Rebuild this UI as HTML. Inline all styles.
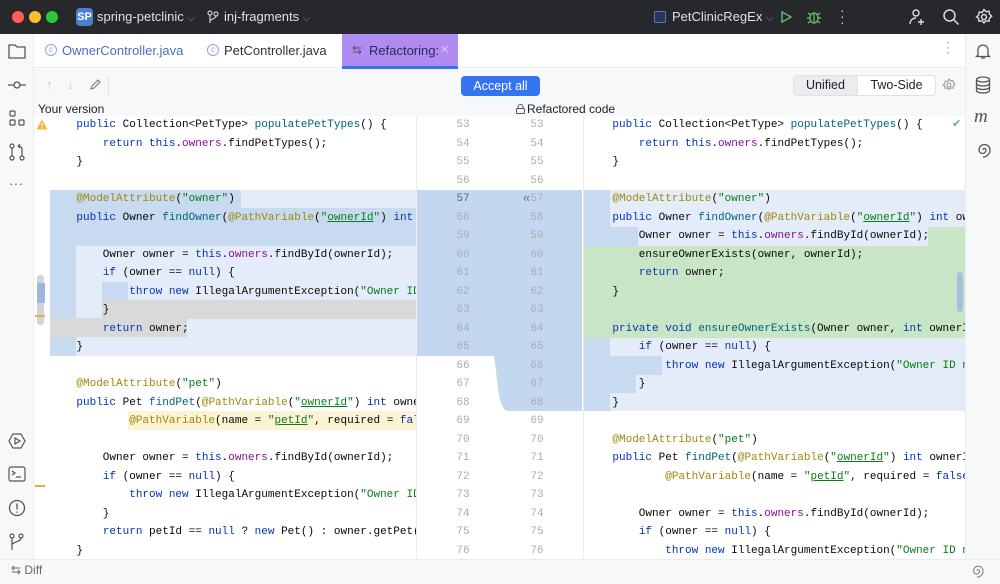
<!DOCTYPE html>
<html><head><meta charset="utf-8"><style>
*{margin:0;padding:0;box-sizing:border-box}
body{width:1000px;height:584px;overflow:hidden;background:#fff;font-family:"Liberation Sans",sans-serif;position:relative}
.abs{position:absolute}
.code{font-family:"Liberation Mono",monospace;font-size:11px;white-space:pre;color:#080808;line-height:18.5px;height:18.5px}
.k{color:#0033b3}.f{color:#871094}.a{color:#9e880d}.s{color:#067d17}.m{color:#00627a}.u{text-decoration:underline}
.num{font-family:"Liberation Mono",monospace;font-size:11px;color:#a8adb5;line-height:18.5px;width:30px;text-align:center}
svg{position:absolute}
</style></head><body>
<!-- title bar -->
<div class="abs" style="left:0;top:0;width:1000px;height:34px;background:#27282c"></div>
<div class="abs" style="left:12px;top:11px;width:12px;height:12px;border-radius:6px;background:#fe5f57"></div>
<div class="abs" style="left:29px;top:11px;width:12px;height:12px;border-radius:6px;background:#febc2e"></div>
<div class="abs" style="left:46px;top:11px;width:12px;height:12px;border-radius:6px;background:#28c840"></div>
<div class="abs" style="left:76px;top:8px;width:17px;height:18px;border-radius:4px;background:#4a80d0;color:#fff;font-size:11px;font-weight:bold;line-height:18px;text-align:center">SP</div>
<div class="abs" style="left:97px;top:9px;color:#dfe1e5;font-size:13px">spring-petclinic <span style="color:#888;font-size:10px">⌵</span></div>
<svg style="left:207px;top:10px" width="12" height="14" viewBox="0 0 12 14" fill="none" stroke="#ccc" stroke-width="1.2"><circle cx="3" cy="3" r="2"/><circle cx="9" cy="4" r="2"/><path d="M3 5v8M9 6c0 3-6 3-6 5"/></svg>
<div class="abs" style="left:224px;top:9px;color:#dfe1e5;font-size:13px">inj-fragments <span style="color:#888;font-size:10px">⌵</span></div>
<div class="abs" style="left:654px;top:11px;width:12px;height:12px;border:1.5px solid #5578b8;border-radius:2px;background:#27345a"></div>
<div class="abs" style="left:672px;top:9px;color:#dfe1e5;font-size:13px">PetClinicRegEx <span style="color:#888;font-size:10px">⌵</span></div>
<svg style="left:779px;top:10px" width="14" height="14" viewBox="0 0 14 14" fill="none" stroke="#5fb865" stroke-width="1.5"><path d="M3 2l9 5-9 5z"/></svg>
<svg style="left:806px;top:9px" width="16" height="16" viewBox="0 0 16 16" fill="none" stroke="#5fb865" stroke-width="1.4"><ellipse cx="8" cy="9" rx="4" ry="5"/><path d="M1 9h3M12 9h3M2 4l3 2M14 4l-3 2M2 14l3-2M14 14l-3-2M8 4v10"/></svg>
<div class="abs" style="left:840px;top:7px;color:#ccc;font-size:14px;line-height:6px">·<br>·<br>·</div>
<svg style="left:908px;top:8px" width="18" height="18" viewBox="0 0 18 18" fill="none" stroke="#ddd" stroke-width="1.4"><circle cx="8" cy="5" r="3"/><path d="M2 16c0-4 3-6 6-6M13 11v6M10 14h6"/></svg>
<svg style="left:942px;top:8px" width="18" height="18" viewBox="0 0 18 18" fill="none" stroke="#ddd" stroke-width="1.5"><circle cx="7.5" cy="7.5" r="5.5"/><path d="M11.5 11.5l5 5"/></svg>
<svg style="left:975px;top:8px" width="18" height="18" viewBox="0 0 18 18" fill="none" stroke="#ddd" stroke-width="1.4"><circle cx="9" cy="9" r="2.5"/><path d="M9 1.5l2 2.2 3-.5.5 3 2.2 2-2.2 2-.5 3-3-.5-2 2.2-2-2.2-3 .5-.5-3L1.5 9l2.2-2 .5-3 3 .5z"/></svg>

<!-- left tool strip -->
<div class="abs" style="left:0;top:34px;width:34px;height:525px;background:#f7f8fa;border-right:1px solid #ebecf0"></div>
<svg style="left:8px;top:43px" width="18" height="16" viewBox="0 0 18 16" fill="none" stroke="#555" stroke-width="1.3"><path d="M1 2h6l2 2h8v11H1z"/></svg>
<svg style="left:8px;top:79px" width="18" height="12" viewBox="0 0 18 12" fill="none" stroke="#555" stroke-width="1.3"><circle cx="9" cy="6" r="3"/><path d="M0 6h6M12 6h6"/></svg>
<svg style="left:9px;top:110px" width="16" height="16" viewBox="0 0 16 16" fill="none" stroke="#555" stroke-width="1.2"><rect x="1" y="1" width="5" height="5" rx="1"/><rect x="1" y="10" width="5" height="5" rx="1"/><rect x="10" y="10" width="5" height="5" rx="1"/></svg>
<svg style="left:9px;top:143px" width="16" height="18" viewBox="0 0 16 18" fill="none" stroke="#555" stroke-width="1.2"><circle cx="3" cy="3" r="2"/><circle cx="3" cy="15" r="2"/><circle cx="13" cy="15" r="2"/><path d="M3 5v8M13 13V6c0-2-2-3-4-3M9 3l2-2M9 3l2 2"/></svg>
<div class="abs" style="left:9px;top:175px;color:#666;font-size:14px">···</div>
<svg style="left:8px;top:432px" width="18" height="18" viewBox="0 0 18 18" fill="none" stroke="#555" stroke-width="1.2"><path d="M5 2h8l4 7-4 7H5L1 9z"/><path d="M7 6l5 3-5 3z"/></svg>
<svg style="left:8px;top:466px" width="18" height="16" viewBox="0 0 18 16" fill="none" stroke="#555" stroke-width="1.2"><rect x="1" y="1" width="16" height="14" rx="2"/><path d="M4 5l3 2-3 2M8 11h5"/></svg>
<svg style="left:8px;top:499px" width="18" height="18" viewBox="0 0 18 18" fill="none" stroke="#555" stroke-width="1.3"><circle cx="9" cy="9" r="7.5"/><path d="M9 4.5v6M9 12.5v1.2"/></svg>
<svg style="left:9px;top:533px" width="16" height="18" viewBox="0 0 16 18" fill="none" stroke="#555" stroke-width="1.2"><circle cx="3" cy="3" r="2"/><circle cx="12" cy="3" r="2"/><path d="M3 5v12M12 5c0 4-9 4-9 7"/></svg>

<!-- tabs -->
<div class="abs" style="left:34px;top:34px;width:931px;height:34px;background:#fff;border-bottom:1px solid #ebecf0"></div>
<div class="abs" style="left:45px;top:44px;width:12px;height:12px;border:1.2px solid #8fa6d8;border-radius:6px;font-size:8px;color:#8fa6d8;text-align:center;line-height:10px">c</div>
<div class="abs" style="left:62px;top:43px;font-size:13px;color:#4a6fc1">OwnerController.java</div>
<div class="abs" style="left:207px;top:44px;width:12px;height:12px;border:1.2px solid #8fa6d8;border-radius:6px;font-size:8px;color:#8fa6d8;text-align:center;line-height:10px">c</div>
<div class="abs" style="left:224px;top:43px;font-size:13px;color:#333">PetController.java</div>
<div class="abs" style="left:342px;top:34px;width:116px;height:35px;background:#b08cf2;border-bottom:3px solid #3574f0"></div>
<div class="abs" style="left:352px;top:43px;font-size:12px;color:#555">⇆</div>
<div class="abs" style="left:369px;top:43px;font-size:13px;color:#2a2a55">Refactoring:</div>
<div class="abs" style="left:440px;top:43px;font-size:11px;color:#d8c6f8">✕</div>
<div class="abs" style="left:946px;top:40px;color:#888;font-size:12px;line-height:5px">·<br>·<br>·</div>

<!-- right strip -->
<div class="abs" style="left:965px;top:34px;width:35px;height:525px;background:#f7f8fa;border-left:1px solid #ebecf0"></div>
<svg style="left:974px;top:42px" width="18" height="18" viewBox="0 0 18 18" fill="none" stroke="#555" stroke-width="1.3"><path d="M4 13V8a5 5 0 0110 0v5l1.5 1.5h-13zM7 16h4"/></svg>
<svg style="left:975px;top:76px" width="16" height="18" viewBox="0 0 16 18" fill="none" stroke="#555" stroke-width="1.3"><ellipse cx="8" cy="3.5" rx="6.5" ry="2.5"/><path d="M1.5 3.5v11c0 1.4 3 2.5 6.5 2.5s6.5-1.1 6.5-2.5v-11M1.5 7.5c0 1.4 3 2.5 6.5 2.5s6.5-1.1 6.5-2.5M1.5 11c0 1.4 3 2.5 6.5 2.5s6.5-1.1 6.5-2.5"/></svg>
<div class="abs" style="left:974px;top:106px;font-size:19px;font-style:italic;color:#555;font-family:'Liberation Serif',serif">m</div>
<svg style="left:975px;top:142px" width="16" height="16" viewBox="0 0 16 16" fill="none" stroke="#555" stroke-width="1.3"><path d="M8 8a1.5 1.5 0 113 0 3.5 3.5 0 11-7 0 5.5 5.5 0 0111 0 7 7 0 01-7 7"/></svg>

<!-- toolbar -->
<div class="abs" style="left:34px;top:69px;width:931px;height:32px;background:#f7f8fa"></div>
<div class="abs" style="left:46px;top:77px;font-size:13px;color:#c5c8ce">↑</div>
<div class="abs" style="left:67px;top:77px;font-size:13px;color:#c5c8ce">↓</div>
<svg style="left:89px;top:79px" width="12" height="12" viewBox="0 0 12 12" fill="none" stroke="#777" stroke-width="1.1"><path d="M2 10l1-3 6-6 2 2-6 6z"/></svg>
<div class="abs" style="left:108px;top:77px;width:1px;height:20px;background:#e0e0e0"></div>
<div class="abs" style="left:461px;top:76px;width:79px;height:20px;background:#3574f0;border-radius:4px;color:#fff;font-size:12.5px;text-align:center;line-height:20px">Accept all</div>
<div class="abs" style="left:793px;top:75px;width:143px;height:21px;border:1px solid #dfe1e5;border-radius:4px;background:#fff"></div>
<div class="abs" style="left:794px;top:76px;width:64px;height:19px;background:#ebecf0;border-right:1px solid #dfe1e5;font-size:12.5px;text-align:center;line-height:19px;color:#222">Unified</div>
<div class="abs" style="left:858px;top:76px;width:77px;height:19px;font-size:12.5px;text-align:center;line-height:19px;color:#222">Two-Side</div>
<svg style="left:942px;top:78px" width="14" height="14" viewBox="0 0 18 18" fill="none" stroke="#999" stroke-width="1.4"><circle cx="9" cy="9" r="2.5"/><path d="M9 1.5l2 2.2 3-.5.5 3 2.2 2-2.2 2-.5 3-3-.5-2 2.2-2-2.2-3 .5-.5-3L1.5 9l2.2-2 .5-3 3 .5z"/></svg>
<div class="abs" style="left:34px;top:101px;width:931px;height:15px;background:#f7f8fa"></div>
<div class="abs" style="left:38px;top:102px;font-size:12px;color:#222">Your version</div>
<svg style="left:516px;top:104px" width="9" height="10" viewBox="0 0 9 10" fill="none" stroke="#555" stroke-width="1"><rect x="0.5" y="4.5" width="8" height="5" rx="1"/><path d="M2 4.5V3a2.5 2.5 0 015 0v1.5"/></svg>
<div class="abs" style="left:527px;top:102px;font-size:12px;color:#222">Refactored code</div>

<!-- diff backgrounds left -->
<div class="abs" style="left:50px;top:190px;width:366px;height:166px;background:#e3ecf8"></div>
<div class="abs" style="left:50px;top:190px;width:26px;height:166px;background:#c8daf0"></div>
<div class="abs" style="left:76px;top:190px;width:165px;height:18.5px;background:#c8daf0"></div>
<div class="abs" style="left:76px;top:208px;width:340px;height:18.5px;background:#c8daf0"></div>
<div class="abs" style="left:50px;top:227px;width:366px;height:18.5px;background:#c8daf0"></div>
<div class="abs" style="left:102px;top:282px;width:26px;height:18.5px;background:#c8daf0"></div>
<div class="abs" style="left:102px;top:300px;width:314px;height:18.5px;background:#d9d9d9"></div>
<div class="abs" style="left:50px;top:318px;width:137px;height:18.5px;background:#d9d9d9"></div>
<div class="abs" style="left:128px;top:411px;width:288px;height:18.5px;background:#fbf3d3"></div>

<!-- middle -->
<div class="abs" style="left:416px;top:116px;width:1px;height:443px;background:#ebecf0"></div>
<div class="abs" style="left:583px;top:116px;width:1px;height:443px;background:#ebecf0"></div>
<svg style="left:0;top:0" width="1000" height="584"><path d="M417 190H582V411H508Q502 411 499 395L494 356H417Z" fill="#c3d7ee"/></svg>
<div class="abs" style="left:523px;top:190px;font-size:13px;color:#6c7a90">«</div>

<!-- diff backgrounds right -->
<div class="abs" style="left:584px;top:190px;width:381px;height:221px;background:#e3ecf8"></div>
<div class="abs" style="left:584px;top:190px;width:26px;height:37px;background:#c8daf0"></div>
<div class="abs" style="left:584px;top:227px;width:381px;height:111px;background:#c8e6c6"></div>
<div class="abs" style="left:638px;top:227px;width:290px;height:18.5px;background:#e3ecf8"></div>
<div class="abs" style="left:584px;top:227px;width:54px;height:18.5px;background:#c8daf0"></div>
<div class="abs" style="left:584px;top:338px;width:26px;height:73px;background:#c8daf0"></div>
<div class="abs" style="left:610px;top:356px;width:52px;height:18.5px;background:#c8daf0"></div>
<div class="abs" style="left:610px;top:374px;width:26px;height:18.5px;background:#c8daf0"></div>

<!-- scroll markers -->
<div class="abs" style="left:37px;top:275px;width:7px;height:50px;background:#d2d4d8;border-radius:3px"></div>
<div class="abs" style="left:37px;top:283px;width:8px;height:20px;background:#9ab7e0"></div>
<div class="abs" style="left:35px;top:315px;width:10px;height:2px;background:#e0b040"></div>
<div class="abs" style="left:35px;top:485px;width:10px;height:2px;background:#e0b040"></div>
<div class="abs" style="left:957px;top:272px;width:6px;height:40px;background:#a6bfe0;border-radius:3px"></div>
<svg style="left:36px;top:119px" width="12" height="11" viewBox="0 0 12 11"><path d="M6 0.5L11.5 10.5H0.5z" fill="#f0b63c"/><path d="M6 4v3M6 8.3v1" stroke="#fff" stroke-width="1.2"/></svg>
<div class="abs" style="left:952px;top:117px;font-size:11px;color:#5fb865">✔</div>

<!-- left code -->
<div class="abs" style="left:50px;top:116px;width:366px;height:443px;overflow:hidden">
<div class="code">    <span class="k">public</span> Collection&lt;PetType&gt; <span class="m">populatePetTypes</span>() {</div>
<div class="code">        <span class="k">return this</span>.<span class="f">owners</span>.findPetTypes();</div>
<div class="code">    }</div>
<div class="code"> </div>
<div class="code">    <span class="a">@ModelAttribute</span>(<span class="s">"owner"</span>)</div>
<div class="code">    <span class="k">public</span> Owner <span class="m">findOwner</span>(<span class="a">@PathVariable</span>(<span class="s">"<span class="u">ownerId</span>"</span>) <span class="k">int</span> ownerId) {</div>
<div class="code"> </div>
<div class="code">        Owner owner = <span class="k">this</span>.<span class="f">owners</span>.findById(ownerId);</div>
<div class="code">        <span class="k">if</span> (owner == <span class="k">null</span>) {</div>
<div class="code">            <span class="k">throw new</span> IllegalArgumentException(<span class="s">"Owner ID not found"</span>);</div>
<div class="code">        }</div>
<div class="code">        <span class="k">return</span> owner;</div>
<div class="code">    }</div>
<div class="code"> </div>
<div class="code">    <span class="a">@ModelAttribute</span>(<span class="s">"pet"</span>)</div>
<div class="code">    <span class="k">public</span> Pet <span class="m">findPet</span>(<span class="a">@PathVariable</span>(<span class="s">"<span class="u">ownerId</span>"</span>) <span class="k">int</span> ownerId,</div>
<div class="code">            <span class="a">@PathVariable</span>(name = <span class="s">"<span class="u">petId</span>"</span>, required = <span class="k">false</span>) Integer petId) {</div>
<div class="code"> </div>
<div class="code">        Owner owner = <span class="k">this</span>.<span class="f">owners</span>.findById(ownerId);</div>
<div class="code">        <span class="k">if</span> (owner == <span class="k">null</span>) {</div>
<div class="code">            <span class="k">throw new</span> IllegalArgumentException(<span class="s">"Owner ID not found"</span>);</div>
<div class="code">        }</div>
<div class="code">        <span class="k">return</span> petId == <span class="k">null</span> ? <span class="k">new</span> Pet() : owner.getPet(petId);</div>
<div class="code">    }</div>
</div>

<!-- numbers -->
<div class="abs" style="left:448px;top:116px">
<div class="num">53</div><div class="num">54</div><div class="num">55</div><div class="num">56</div><div class="num" style="color:#5f6670">57</div><div class="num">58</div><div class="num">59</div><div class="num">60</div><div class="num">61</div><div class="num">62</div><div class="num">63</div><div class="num">64</div><div class="num">65</div><div class="num">66</div><div class="num">67</div><div class="num">68</div><div class="num">69</div><div class="num">70</div><div class="num">71</div><div class="num">72</div><div class="num">73</div><div class="num">74</div><div class="num">75</div><div class="num">76</div>
</div>
<div class="abs" style="left:522px;top:116px">
<div class="num">53</div><div class="num">54</div><div class="num">55</div><div class="num">56</div><div class="num">57</div><div class="num">58</div><div class="num">59</div><div class="num">60</div><div class="num">61</div><div class="num">62</div><div class="num">63</div><div class="num">64</div><div class="num">65</div><div class="num">66</div><div class="num">67</div><div class="num">68</div><div class="num">69</div><div class="num">70</div><div class="num">71</div><div class="num">72</div><div class="num">73</div><div class="num">74</div><div class="num">75</div><div class="num">76</div>
</div>

<!-- right code -->
<div class="abs" style="left:586px;top:116px;width:379px;height:443px;overflow:hidden">
<div class="code">    <span class="k">public</span> Collection&lt;PetType&gt; <span class="m">populatePetTypes</span>() {</div>
<div class="code">        <span class="k">return this</span>.<span class="f">owners</span>.findPetTypes();</div>
<div class="code">    }</div>
<div class="code"> </div>
<div class="code">    <span class="a">@ModelAttribute</span>(<span class="s">"owner"</span>)</div>
<div class="code">    <span class="k">public</span> Owner <span class="m">findOwner</span>(<span class="a">@PathVariable</span>(<span class="s">"<span class="u">ownerId</span>"</span>) <span class="k">int</span> ownerId) {</div>
<div class="code">        Owner owner = <span class="k">this</span>.<span class="f">owners</span>.findById(ownerId);</div>
<div class="code">        ensureOwnerExists(owner, ownerId);</div>
<div class="code">        <span class="k">return</span> owner;</div>
<div class="code">    }</div>
<div class="code"> </div>
<div class="code">    <span class="k">private void</span> <span class="m">ensureOwnerExists</span>(Owner owner, <span class="k">int</span> ownerId) {</div>
<div class="code">        <span class="k">if</span> (owner == <span class="k">null</span>) {</div>
<div class="code">            <span class="k">throw new</span> IllegalArgumentException(<span class="s">"Owner ID not found"</span>);</div>
<div class="code">        }</div>
<div class="code">    }</div>
<div class="code"> </div>
<div class="code">    <span class="a">@ModelAttribute</span>(<span class="s">"pet"</span>)</div>
<div class="code">    <span class="k">public</span> Pet <span class="m">findPet</span>(<span class="a">@PathVariable</span>(<span class="s">"<span class="u">ownerId</span>"</span>) <span class="k">int</span> ownerId,</div>
<div class="code">            <span class="a">@PathVariable</span>(name = <span class="s">"<span class="u">petId</span>"</span>, required = <span class="k">false</span>) Integer petId) {</div>
<div class="code"> </div>
<div class="code">        Owner owner = <span class="k">this</span>.<span class="f">owners</span>.findById(ownerId);</div>
<div class="code">        <span class="k">if</span> (owner == <span class="k">null</span>) {</div>
<div class="code">            <span class="k">throw new</span> IllegalArgumentException(<span class="s">"Owner ID not found"</span>);</div>
</div>

<!-- status bar -->
<div class="abs" style="left:0;top:559px;width:1000px;height:25px;background:#f7f8fa;border-top:1px solid #ebecf0"></div>
<div class="abs" style="left:11px;top:563px;font-size:12px;color:#666">⇆ Diff</div>
<svg style="left:970px;top:564px" width="14" height="14" viewBox="0 0 16 16" fill="none" stroke="#888" stroke-width="1.3"><path d="M8 8a1.5 1.5 0 113 0 3.5 3.5 0 11-7 0 5.5 5.5 0 0111 0 7 7 0 01-7 7"/></svg>
</body></html>
